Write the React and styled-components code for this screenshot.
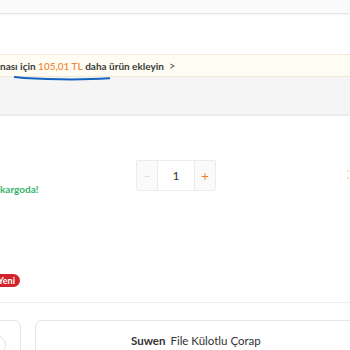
import React from 'react'
import styled, { createGlobalStyle } from 'styled-components'

const GlobalStyle = createGlobalStyle`
  html, body {
    margin: 0;
    padding: 0;
    background: #fff;
  }
  body {
    font-family: Lato, "Noto Sans", sans-serif;
    color: #333;
    width: 350px;
    height: 350px;
    overflow: hidden;
  }
`

const App = () => (
  <Page>
    <GlobalStyle />
    <TopBar />
    <Banner>
      <BannerText>
        nası için <Amount>105,01 TL</Amount> daha ürün ekleyin
        <Chevron>&gt;</Chevron>
      </BannerText>
      <Scribble viewBox="0 0 100 6" preserveAspectRatio="none">
        <path d="M1 1.2 C 25 4.5, 70 4.8, 97 2.8" stroke="#1565c0" strokeWidth="2.4" fill="none" strokeLinecap="round" />
      </Scribble>
    </Banner>
    <GrayBand />
    <ItemRow>
      <Shipping>kargoda!</Shipping>
      <Stepper>
        <StepButton $muted>−</StepButton>
        <StepValue>1</StepValue>
        <StepButton>+</StepButton>
      </Stepper>
      <EdgeMark />
    </ItemRow>
    <BadgeRow>
      <Badge>Yeni</Badge>
    </BadgeRow>
    <Divider />
    <Cards>
      <SideCard>
        <RoundButton />
      </SideCard>
      <ProductCard>
        <ProductTitle>
          <Brand>Suwen</Brand> File Külotlu Çorap
        </ProductTitle>
      </ProductCard>
    </Cards>
  </Page>
)

export default App

const Page = styled.div`
  width: 350px;
  height: 350px;
  overflow: hidden;
  display: flex;
  flex-direction: column;
`

const TopBar = styled.div`
  height: 13px;
  flex-shrink: 0;
  background: #fafafa;
  border-bottom: 1px solid #e4e4e4;
  box-shadow: 0 1px 1px rgba(0, 0, 0, 0.03);
`

const Banner = styled.div`
  position: relative;
  margin-top: 40px;
  height: 21px;
  flex-shrink: 0;
  background: #fffdf3;
  border-top: 1px solid #efe9d6;
  border-bottom: 1px solid #efe9d6;
  display: flex;
  align-items: center;
`

const BannerText = styled.div`
  font-size: 10px;
  font-weight: 700;
  color: #3a3a3a;
  white-space: nowrap;
`

const Amount = styled.span`
  color: #f0893c;
  font-weight: 600;
`

const Chevron = styled.span`
  margin-left: 5px;
  font-size: 11px;
  font-weight: 400;
  color: #555;
`

const Scribble = styled.svg`
  position: absolute;
  left: 14px;
  top: 21px;
  width: 98px;
  height: 5px;
`

const GrayBand = styled.div`
  height: 37px;
  flex-shrink: 0;
  background: #f5f5f5;
  border-bottom: 2px solid #ebebeb;
`

const ItemRow = styled.div`
  position: relative;
  height: 155px;
  flex-shrink: 0;
  display: flex;
  align-items: flex-start;
`

const Shipping = styled.div`
  margin-top: 67px;
  width: 136px;
  font-size: 10px;
  font-weight: 700;
  color: #35b56a;
`

const Stepper = styled.div`
  margin-top: 44px;
  display: flex;
  height: 29px;
  border: 1px solid #ececec;
  border-radius: 2px;
`

const StepButton = styled.div`
  width: 20px;
  display: flex;
  align-items: center;
  justify-content: center;
  background: #fafafa;
  font-size: 13px;
  color: ${p => (p.$muted ? '#dedede' : '#f27a1a')};
`

const StepValue = styled.div`
  width: 36px;
  display: flex;
  align-items: center;
  justify-content: center;
  font-size: 12px;
  color: #333;
  border-left: 1px solid #ececec;
  border-right: 1px solid #ececec;
  background: #fff;
`

const EdgeMark = styled.div`
  position: absolute;
  right: 1px;
  top: 54px;
  width: 2px;
  height: 9px;
  border-top: 2px solid #fbdcc2;
  border-bottom: 2px solid #fbdcc2;
  box-sizing: border-box;
`

const BadgeRow = styled.div`
  height: 31px;
  flex-shrink: 0;
  overflow: hidden;
  display: flex;
  align-items: flex-start;
  padding-top: 3px;
  box-sizing: border-box;
`

const Badge = styled.span`
  margin-left: -7px;
  padding: 0 5px;
  height: 13px;
  line-height: 13px;
  border-radius: 7px;
  background: #d3232a;
  color: #fff;
  font-size: 9px;
  font-weight: 700;
`

const Divider = styled.div`
  height: 1px;
  flex-shrink: 0;
  background: #efefef;
`

const Cards = styled.div`
  margin-top: 17px;
  display: flex;
  gap: 14px;
  flex: 1;
`

const SideCard = styled.div`
  position: relative;
  width: 31px;
  margin-left: -10px;
  flex-shrink: 0;
  border: 1px solid #e6e6e6;
  border-left: none;
  border-bottom: none;
  border-radius: 0 7px 0 0;
  box-sizing: border-box;
  overflow: hidden;
`

const RoundButton = styled.div`
  position: absolute;
  left: -4px;
  top: 14px;
  width: 18px;
  height: 18px;
  border-radius: 50%;
  border: 1px solid #e0e0e0;
`

const ProductCard = styled.div`
  flex: 1;
  margin-right: -10px;
  border: 1px solid #e6e6e6;
  border-bottom: none;
  border-radius: 7px 7px 0 0;
  padding-top: 13px;
  padding-left: 95px;
`

const ProductTitle = styled.div`
  font-size: 11.5px;
  color: #333;
  white-space: nowrap;
`

const Brand = styled.span`
  font-weight: 700;
  margin-right: 2px;
`
